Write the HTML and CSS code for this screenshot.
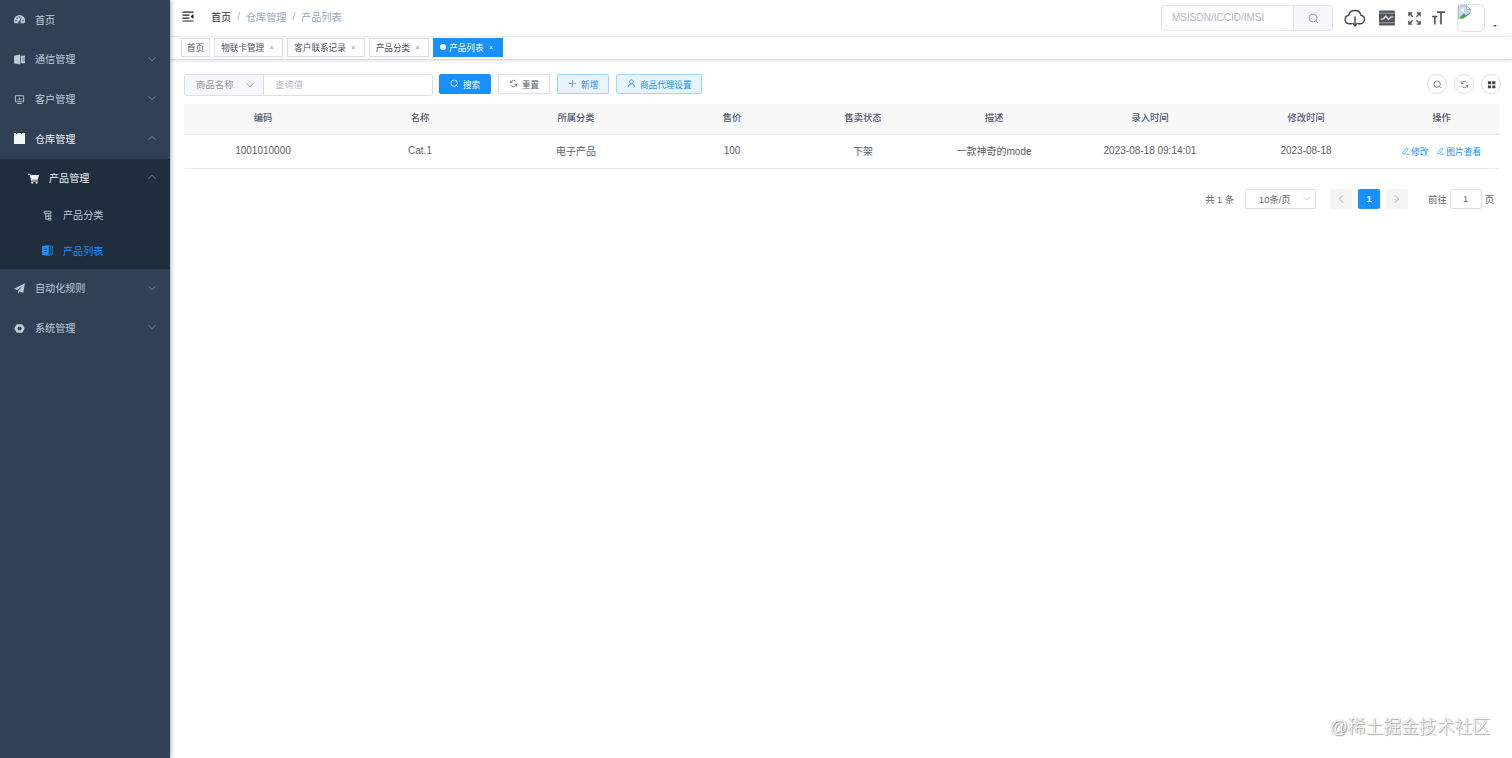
FILE: index.html
```html
<!DOCTYPE html>
<html lang="zh-CN">
<head>
    <meta charset="UTF-8">
    <meta name="viewport" content="width=device-width, initial-scale=1.0">
    <title>产品列表</title>
    <link rel="stylesheet" href="styles.css">
</head>
<body>
    <svg class="sprite" width="0" height="0">
        <symbol id="i-down" viewBox="0 0 10 10"><path d="M1.5 3.2 5 6.7l3.5-3.5" fill="none" stroke="currentColor" stroke-width="1"/></symbol>
        <symbol id="i-search" viewBox="0 0 16 16"><g fill="none" stroke="currentColor" stroke-width="1.3"><circle cx="7.4" cy="7.4" r="5.7"/><path d="m11.5 11.5 2.8 2.8"/></g></symbol>
        <symbol id="i-refresh" viewBox="0 0 16 16"><g fill="none" stroke="currentColor" stroke-width="1.3"><path d="M2.6 6.2A5.8 5.8 0 0 1 13.2 5.4M13.4 9.8A5.8 5.8 0 0 1 2.8 10.6"/><path d="M2.4 2.6v3.8h3.8M13.6 13.4V9.6H9.8"/></g></symbol>
        <symbol id="i-edit" viewBox="0 0 16 16"><path d="m2 10.8 7-9 3.2 2.4-7 9-3.6 1zM7 14.4h8" fill="none" stroke="currentColor" stroke-width="1.3"/></symbol>
    </svg>

    <div class="app">
        <aside class="sidebar">
            <div class="menu-item">
                <svg class="menu-icon" viewBox="0 0 16 16"><path fill="currentColor" d="M8 1.4a8 8 0 0 0-8 8c0 1.6.4 3 1.100 4.200h13.800A8 8 0 0 0 8 1.400z"/><g fill="#304156"><circle cx="3" cy="9.4" r="1.100"/><circle cx="4.500" cy="5.800" r="1.100"/><circle cx="8" cy="4.200" r="1.100"/><circle cx="13" cy="9.400" r="1.100"/><path d="m10 5 1.200.4-2 5.200a1.800 1.800 0 1 1-1.200-.4z"/></g></svg>
                <span>首页</span>
            </div>
            <div class="menu-item">
                <svg class="menu-icon" viewBox="0 0 16 16"><path fill="currentColor" d="M0 2.500 9 .8v14.400L0 13.500zM10 2.600h6v10.800h-6z"/><path d="M12 6h4M12 9h4" stroke="#304156" stroke-width="1"/></svg>
                <span>通信管理</span>
                <svg class="arrow"><use href="#i-down"/></svg>
            </div>
            <div class="menu-item">
                <svg class="menu-icon" viewBox="0 0 16 16"><path fill="none" stroke="currentColor" stroke-width="1.3" d="M2 2.5h12v8.8H2zM4.5 13.8h7M5.5 9V7.2M8 9V5M10.5 9V6.5"/></svg>
                <span>客户管理</span>
                <svg class="arrow"><use href="#i-down"/></svg>
            </div>
            <div class="menu-item open">
                <svg class="menu-icon" viewBox="0 0 16 16"><path fill="currentColor" d="M0 0h3v1.500h2V0h5v1.500h2V0h4v16H0z"/></svg>
                <span>仓库管理</span>
                <svg class="arrow up"><use href="#i-down"/></svg>
            </div>
            <div class="submenu">
                <div class="menu-item level-2 open">
                    <svg class="menu-icon" viewBox="0 0 16 16"><path fill="currentColor" d="M0 1h3.400l.5 1.800H16l-1.600 7H5.900l.3 1.200h8v1.400H4.900L2.400 2.500H0z"/><circle cx="6.2" cy="14.200" r="1.500" fill="currentColor"/><circle cx="12.6" cy="14.200" r="1.500" fill="currentColor"/></svg>
                    <span>产品管理</span>
                    <svg class="arrow up"><use href="#i-down"/></svg>
                </div>
                <div class="menu-item level-3">
                    <svg class="menu-icon" viewBox="0 0 16 16"><path fill="none" stroke="currentColor" stroke-width="1.3" d="M3 2h10v3H3zM5.500 5v8.500H9M5.500 9H9M9 7.500h4v2.500H9zM9 12h4v2.500H9z"/></svg>
                    <span>产品分类</span>
                </div>
                <div class="menu-item level-3 active">
                    <svg class="menu-icon" viewBox="0 0 16 16"><path fill="currentColor" d="M0 1.500 10 0v16L0 14.500z"/><path fill="none" stroke="currentColor" d="M10 1.500h5.3v13H10M12.7 2v12"/><path d="M3 6h4M3 9.5h4" stroke="#1f2d3d" stroke-width="1"/></svg>
                    <span>产品列表</span>
                </div>
            </div>
            <div class="menu-item">
                <svg class="menu-icon" viewBox="0 0 16 16"><path fill="currentColor" d="M16 .3 13.300 14.500l-4.900-2.300L6.100 15.600v-4.400L13 4l-8.500 6.300L0 8.500z"/></svg>
                <span>自动化规则</span>
                <svg class="arrow"><use href="#i-down"/></svg>
            </div>
            <div class="menu-item">
                <svg class="menu-icon" viewBox="0 0 16 16"><path fill="none" stroke="currentColor" stroke-width="3.800" stroke-linejoin="round" d="M5.2 3.6h5.6L13.500 8l-2.700 4.4H5.200L2.500 8z"/></svg>
                <span>系统管理</span>
                <svg class="arrow"><use href="#i-down"/></svg>
            </div>
        </aside>

        <div class="main">
            <header class="navbar">
                <svg class="hamburger" viewBox="0 0 12 12"><path d="M0 1.2h12M0 4.5h7.5M0 7.7h7.5M0 10.9h12" stroke="#222" stroke-width="1.3"/><path d="M12 3.4v5.2L8.8 6z" fill="#222"/></svg>
                <nav class="breadcrumb">
                    <span class="home">首页</span><i>/</i><span>仓库管理</span><i>/</i><span>产品列表</span>
                </nav>
                <div class="right-menu">
                    <div class="header-search">
                        <div class="search-text">MSISDN/ICCID/IMSI</div>
                        <div class="search-btn"><svg width="11" height="11"><use href="#i-search"/></svg></div>
                    </div>
                    <svg class="nav-cloud" viewBox="0 0 22 18"><g fill="none" stroke="#444a50" stroke-width="1.4"><path d="M8 14.8H5.4A4.3 4.3 0 0 1 4.6 6.3 6.4 6.4 0 0 1 17 6.3a4.3 4.3 0 0 1-.6 8.5H14"/><path d="M11 7.5v9M8.4 14l2.6 2.7 2.6-2.7"/></g></svg>
                    <svg class="nav-monitor" viewBox="0 0 16 16"><rect y=".5" width="16" height="15" rx="1" fill="#51565c"/><path d="M0 3.200h16M0 12.800h16" stroke="#d5d7d9" stroke-width=".6"/><path d="M1.500 9h3l2.300-2.800 2.800 3.300L11.700 7h2.800" fill="none" stroke="#fff" stroke-width="1.2"/></svg>
                    <svg class="nav-full" viewBox="0 0 14 14"><path d="M1 4.500V1h3.500M9.500 1H13v3.500M13 9.500V13H9.500M4.500 13H1V9.500M1.200 1.200 5 5M12.800 1.200 9 5M12.800 12.800 9 9M1.200 12.800 5 9" fill="none" stroke="#51565c" stroke-width="1.500"/></svg>
                    <svg class="nav-size" viewBox="0 0 13 14"><path d="M5 1.200h8M9 1v12.500M0 5.500h5.500M2.800 5.500v8" fill="none" stroke="#51565c" stroke-width="1.700"/></svg>
                    <div class="avatar">
                        <svg width="13" height="14" viewBox="0 0 13 14"><path d="M.5.5h8l4 4v9H.5z" fill="#c8daf3" stroke="#b9c0c8"/><path d="M8.500.5v4h4z" fill="#fff" stroke="#aab3bd"/><circle cx="4.500" cy="5" r="1.700" fill="#fff"/><path d="m1 13 4.500-4.500L8 10l4-2.500V9l-6 4.500z" fill="#4fa541"/><path d="m5 14 8-6v6z" fill="#fff"/></svg>
                    </div>
                    <span class="caret"></span>
                </div>
            </header>

            <div class="tags">
                <span class="tag">首页</span>
                <span class="tag">物联卡管理<b>×</b></span>
                <span class="tag">客户联系记录<b>×</b></span>
                <span class="tag">产品分类<b>×</b></span>
                <span class="tag current">产品列表<b>×</b></span>
            </div>

            <section class="content">
                <div class="toolbar">
                    <div class="query">
                        <div class="query-select">商品名称<svg width="10" height="10"><use href="#i-down"/></svg></div>
                        <div class="query-input">查询值</div>
                    </div>
                    <button class="btn primary"><svg><use href="#i-search"/></svg>搜索</button>
                    <button class="btn"><svg><use href="#i-refresh"/></svg>重置</button>
                    <button class="btn plain"><svg viewBox="0 0 16 16"><path d="M8 2v12M2 8h12" stroke="currentColor" stroke-width="1.2"/></svg>新增</button>
                    <button class="btn plain agent"><svg viewBox="0 0 16 16"><g fill="none" stroke="currentColor" stroke-width="1.3"><circle cx="8" cy="5" r="3.500"/><path d="M2 15c0-4 2.500-6 6-6s6 2 6 6"/></g></svg>商品代理设置</button>
                    <div class="tools">
                        <span class="circle"><svg><use href="#i-search"/></svg></span>
                        <span class="circle"><svg><use href="#i-refresh"/></svg></span>
                        <span class="circle"><svg viewBox="0 0 10 10"><path d="M1 1.500h3.500V4.700H1zM5.800 1.500h3.500V4.700H5.800zM1 6h3.500v3.200H1zM5.800 6h3.500v3.200H5.800z" fill="#444"/></svg></span>
                    </div>
                </div>

                <table>
                    <colgroup>
                        <col class="w-code"><col class="w-mid"><col class="w-mid"><col class="w-mid"><col class="w-state"><col class="w-mid"><col class="w-mid"><col class="w-mid"><col>
                    </colgroup>
                    <thead>
                        <tr>
                            <th>编码</th><th>名称</th><th>所属分类</th><th>售价</th><th>售卖状态</th><th>描述</th><th>录入时间</th><th>修改时间</th><th>操作</th>
                        </tr>
                    </thead>
                    <tbody>
                        <tr>
                            <td>1001010000</td>
                            <td>Cat.1</td>
                            <td>电子产品</td>
                            <td>100</td>
                            <td>下架</td>
                            <td>一款神奇的mode</td>
                            <td>2023-08-18 09:14:01</td>
                            <td>2023-08-18</td>
                            <td>
                                <div class="actions">
                                    <a><svg><use href="#i-edit"/></svg>修改</a>
                                    <a><svg><use href="#i-edit"/></svg>图片查看</a>
                                </div>
                            </td>
                        </tr>
                    </tbody>
                </table>

                <div class="pagination">
                    <span>共 1 条</span>
                    <div class="page-size">10条/页<svg width="9" height="9"><use href="#i-down"/></svg></div>
                    <span class="page prev"><svg width="10" height="10"><use href="#i-down"/></svg></span>
                    <span class="page on">1</span>
                    <span class="page next"><svg width="10" height="10"><use href="#i-down"/></svg></span>
                    <span class="jump">前往</span>
                    <div class="page-input">1</div>
                    <span>页</span>
                </div>
            </section>
        </div>
    </div>
    <div class="watermark">@稀土掘金技术社区</div>
</body>
</html>
```

FILE: styles.css
```css
:root {
    --primary: #1890ff;
    --menu-bg: #304156;
    --submenu-bg: #1f2d3d;
    --menu-text: #bfcbd9;
    --border: #dcdfe6;
    --text: #606266;
}

* {
    margin: 0;
    padding: 0;
    box-sizing: border-box;
}

body {
    font-family: "Liberation Sans", "Noto Sans CJK SC", sans-serif;
    font-size: 10px;
    color: var(--text);
    background: #fff;
    overflow: hidden;
}

svg {
    display: block;
    flex: none;
}

.sprite {
    position: absolute;
}

.app {
    display: flex;
    height: 100vh;
}

/* sidebar */
.sidebar {
    width: 170px;
    flex: none;
    background: var(--menu-bg);
    box-shadow: 1px 0 4px rgba(0, 21, 41, 0.35);
    z-index: 1;
}

.menu-item {
    display: flex;
    align-items: center;
    height: 39.7px;
    padding: 0 13px 0 14px;
    color: var(--menu-text);
    font-size: 10.1px;
}

.menu-item span {
    margin-left: 10px;
    padding-bottom: 1.5px;
}

.menu-icon {
    width: 11px;
    height: 11px;
}

.arrow {
    width: 10px;
    height: 10px;
    margin: 0 0 2px auto;
    color: #7f8b99;
}

.arrow.up {
    transform: rotate(180deg);
}

.menu-item.open {
    color: #f4f4f5;
}

.submenu {
    background: var(--submenu-bg);
}

.level-2 {
    padding-left: 28px;
    height: 38.8px;
}

.level-3 {
    padding-left: 42px;
    height: 35.6px;
}

.menu-item.active {
    color: var(--primary);
}

/* top bar */
.main {
    flex: 1;
    min-width: 0;
}

.navbar {
    display: flex;
    align-items: center;
    height: 37px;
    padding: 0 15px 0 12px;
    border-bottom: 1px solid #f0f1f3;
}

.hamburger {
    width: 12px;
    height: 11px;
    margin-bottom: 4px;
}

.breadcrumb {
    display: flex;
    align-items: center;
    margin: 0 0 4px 17px;
    color: #97a8be;
    font-size: 10.1px;
}

.breadcrumb .home {
    color: #303133;
}

.breadcrumb i {
    margin: 0 6px;
    font-style: normal;
    color: #a5adba;
}

.right-menu {
    display: flex;
    align-items: center;
    margin-left: auto;
}

.header-search {
    display: flex;
    width: 172px;
    height: 26px;
    border: 1px solid #e2e5eb;
    border-radius: 3px;
    overflow: hidden;
}

.search-text {
    width: 131px;
    padding-left: 10px;
    line-height: 24px;
    color: #b4b8bf;
}

.search-btn {
    display: flex;
    flex: 1;
    align-items: center;
    justify-content: center;
    border-left: 1px solid #e2e5eb;
    background: #f5f7fa;
    color: #909399;
}

.nav-cloud {
    width: 22px;
    height: 18px;
    margin-left: 11px;
}

.nav-monitor {
    width: 16px;
    height: 16px;
    margin-left: 13px;
}

.nav-full {
    width: 13px;
    height: 13px;
    margin-left: 13px;
}

.nav-size {
    width: 13px;
    height: 14px;
    margin-left: 11px;
}

.avatar {
    width: 28px;
    height: 28px;
    margin-left: 12px;
    border: 1px solid #dcdee0;
    border-radius: 6px;
}

.caret {
    margin: 15px 0 0 8px;
    border: 2.5px solid transparent;
    border-top-color: #555;
    border-bottom: 0;
}

.tags {
    display: flex;
    gap: 4px;
    height: 23px;
    padding: 1px 11px 0;
    border-bottom: 1px solid #d8dce5;
    box-shadow: 0 1px 3px rgba(0, 0, 0, 0.12);
}

.tag {
    display: flex;
    align-items: center;
    height: 19px;
    padding: 0 6px 1px;
    border: 1px solid #d8dce5;
    color: #495060;
    font-size: 8.6px;
}

.tag:first-child {
    padding: 0 5px 1px;
}

.tag b {
    width: 12px;
    padding-left: 3px;
    font-size: 7px;
    font-weight: normal;
    text-align: center;
    color: #888;
}

.tag.current {
    background: var(--primary);
    border-color: var(--primary);
    color: #fff;
}

.tag.current b {
    color: #fff;
}

.tag.current::before {
    content: "";
    width: 6px;
    height: 6px;
    margin-right: 3px;
    border-radius: 50%;
    background: #fff;
}

/* list page */
.content {
    padding: 14px 13px 0 14px;
}

.toolbar {
    display: flex;
    align-items: flex-start;
    height: 30px;
}

.query {
    display: flex;
    width: 249px;
    height: 22px;
    margin-right: 6px;
    border: 1px solid var(--border);
    border-radius: 3px;
    overflow: hidden;
    font-size: 9.4px;
    line-height: 20px;
}

.query-select {
    display: flex;
    align-items: center;
    justify-content: space-between;
    width: 79px;
    padding: 0 8px 0 11px;
    border-right: 1px solid var(--border);
    background: #f5f7fa;
    color: #909399;
}

.query-input {
    padding-left: 11px;
    color: #b8bcc4;
}

.btn {
    display: flex;
    align-items: center;
    justify-content: center;
    gap: 4px;
    width: 52px;
    height: 20px;
    margin-right: 7.1px;
    padding-bottom: 1px;
    border: 1px solid var(--border);
    border-radius: 2px;
    background: #fff;
    color: var(--text);
    font-family: inherit;
    font-size: 8.6px;
}

.btn svg {
    width: 9px;
    height: 9px;
}

.btn.primary {
    background: var(--primary);
    border-color: var(--primary);
    color: #fff;
}

.btn.plain {
    background: #e8f4ff;
    border-color: #a3d3ff;
    color: var(--primary);
}

.btn.agent {
    width: 86px;
}

.tools {
    display: flex;
    gap: 7px;
    margin: 0 -2px 0 auto;
}

.circle {
    display: flex;
    align-items: center;
    justify-content: center;
    width: 20px;
    height: 20px;
    border: 1px solid var(--border);
    border-radius: 50%;
}

.circle svg {
    width: 9px;
    height: 9px;
}

table {
    width: 100%;
    table-layout: fixed;
    border-collapse: separate;
    border-spacing: 0;
    text-align: center;
}

.w-code {
    width: 158px;
}

.w-mid {
    width: 156px;
}

.w-state {
    width: 106px;
}

th {
    height: 31px;
    padding-bottom: 4px;
    border-bottom: 1px solid #e6eaf0;
    background: #f8f8f9;
    color: #515a6e;
    font-size: 9.3px;
    font-weight: 500;
}

td {
    height: 34px;
    padding-bottom: 2px;
    border-bottom: 1px solid #e8ebf1;
    font-size: 10px;
}

.actions {
    display: flex;
    justify-content: center;
    gap: 9px;
    padding-top: 1px;
    color: var(--primary);
    font-size: 8.7px;
}

.actions a {
    display: flex;
    align-items: center;
    gap: 1px;
}

.actions svg {
    width: 8px;
    height: 8px;
}

.pagination {
    display: flex;
    align-items: center;
    justify-content: flex-end;
    height: 20px;
    margin-top: 20px;
    padding-right: 5px;
    font-size: 9.3px;
}

.pagination > span:not(.page) {
    padding-bottom: 1px;
}

.page-size {
    display: flex;
    align-items: center;
    justify-content: space-between;
    width: 71px;
    height: 20px;
    margin: 0 14px 0 11px;
    padding: 0 4px 1px 13px;
    border: 1px solid var(--border);
    border-radius: 2px;
}

.page-size svg {
    color: #c0c4cc;
}

.page {
    display: flex;
    align-items: center;
    justify-content: center;
    width: 22px;
    height: 20px;
    margin-right: 6px;
    border-radius: 2px;
    background: #f4f4f5;
    color: #a8abb2;
}

.page.on {
    background: var(--primary);
    color: #fff;
    font-weight: bold;
}

.page.next {
    margin-right: 0;
}

.prev svg {
    transform: rotate(90deg);
}

.next svg {
    transform: rotate(-90deg);
}

.jump {
    margin-left: 20px;
}

.page-input {
    width: 32px;
    height: 20px;
    margin: 0 3px;
    border: 1px solid var(--border);
    border-radius: 2px;
    line-height: 18px;
    text-align: center;
}

.watermark {
    position: absolute;
    right: 22px;
    bottom: 18px;
    color: #fff;
    font-size: 17.8px;
    font-weight: 300;
    line-height: 26px;
    text-shadow: 0 0 1px #999, 1px 1px 1px #999;
}
```
